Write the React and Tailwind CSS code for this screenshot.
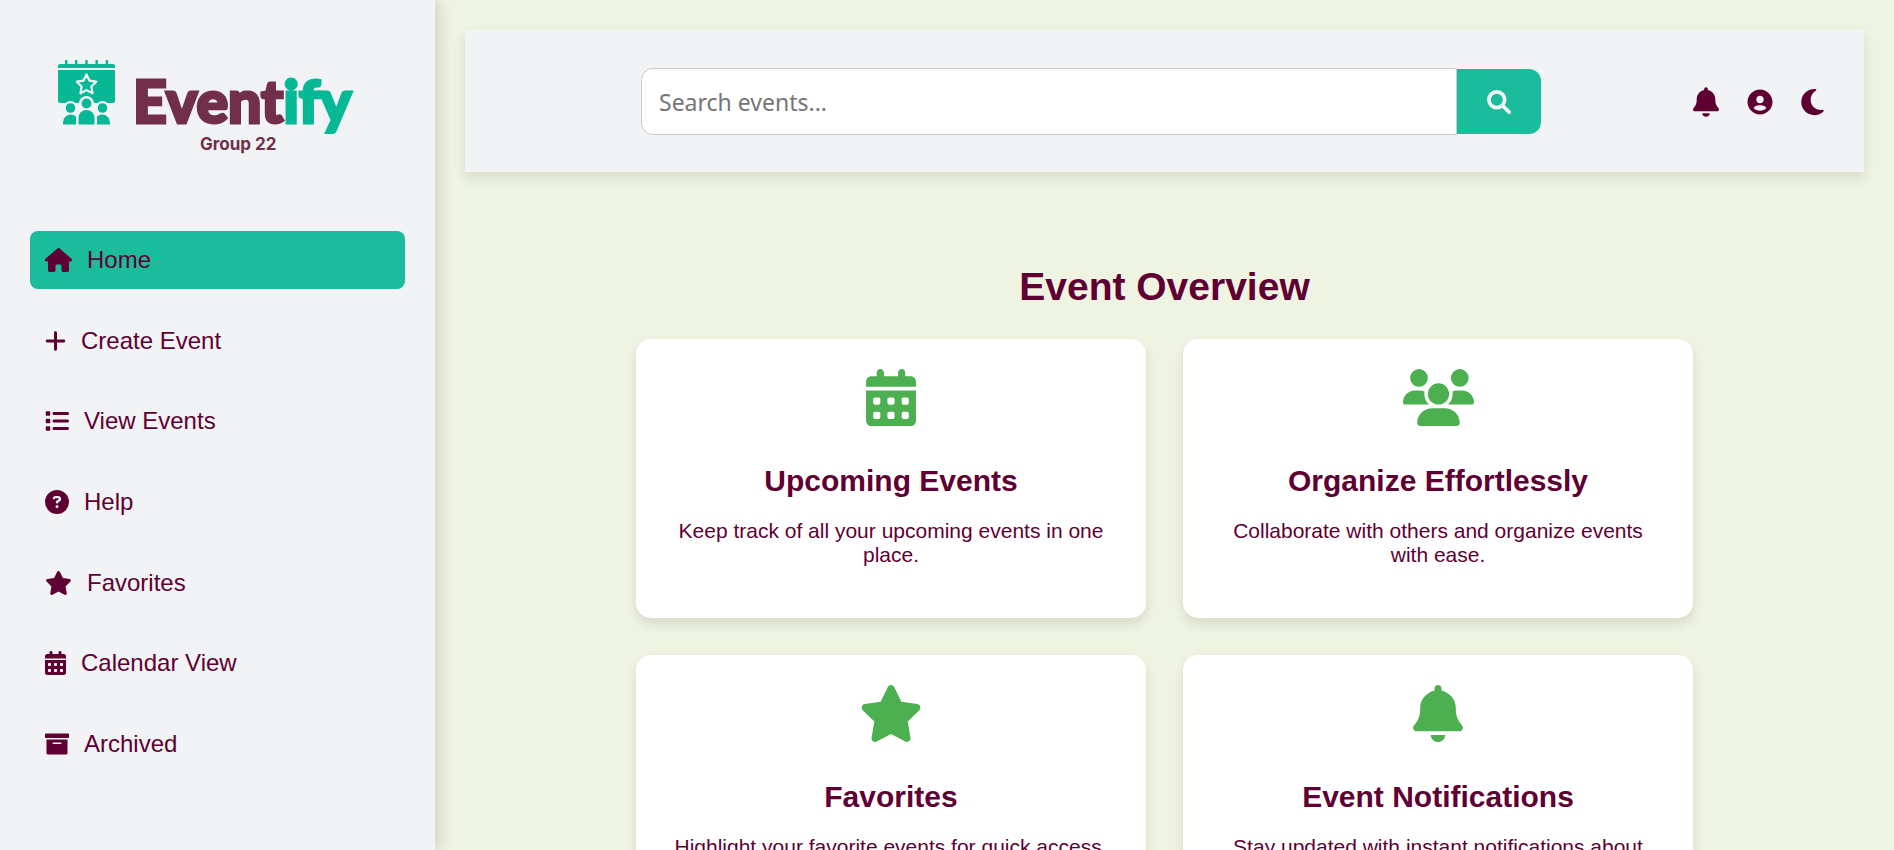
import {
  FaHouse, FaPlus, FaList, FaCircleQuestion, FaStar, FaCalendarDays,
  FaBell, FaMoon,
} from "react-icons/fa6";
import { BiSolidUserCircle } from "react-icons/bi";

function ArchiveIcon({ className }) {
  return (
    <svg viewBox="0 0 512 512" fill="currentColor" className={className} aria-hidden="true">
      <rect x="0" y="32" width="512" height="96" rx="18" />
      <path fillRule="evenodd" d="M32 160h448v288a32 32 0 0 1-32 32H64a32 32 0 0 1-32-32zM176 224a16 16 0 0 0 0 32h160a16 16 0 0 0 0-32z" />
    </svg>
  );
}

const navItems = [
  { label: "Home", Icon: FaHouse, size: "h-6 w-[27px]", active: true },
  { label: "Create Event", Icon: FaPlus, size: "h-6 w-[21px]" },
  { label: "View Events", Icon: FaList, size: "h-6 w-6" },
  { label: "Help", Icon: FaCircleQuestion, size: "h-6 w-6" },
  { label: "Favorites", Icon: FaStar, size: "h-6 w-[27px]" },
  { label: "Calendar View", Icon: FaCalendarDays, size: "h-6 w-[21px]" },
  { label: "Archived", Icon: ArchiveIcon, size: "h-6 w-6" },
];

function PeopleIcon({ className }) {
  return (
    <svg viewBox="0 0 640 512" fill="currentColor" className={className} aria-hidden="true">
      <path d="M144 0a80 80 0 1 1 0 160A80 80 0 1 1 144 0zM512 0a80 80 0 1 1 0 160A80 80 0 1 1 512 0zM0 298.7C0 239.800 47.800 192 106.700 192l42.700 0c15.900 0 31 3.500 44.600 9.700c-1.300 7.200-1.900 14.700-1.900 22.300c0 38.200 16.800 72.500 43.300 96c-.2 0-.4 0-.7 0L21.300 320C9.600 320 0 310.400 0 298.700zM405.300 320c-.2 0-.4 0-.7 0c26.600-23.500 43.300-57.800 43.300-96c0-7.600-.7-15-1.900-22.300c13.600-6.300 28.700-9.700 44.600-9.700l42.700 0C592.200 192 640 239.800 640 298.700c0 11.800-9.600 21.300-21.300 21.300l-213.300 0zM224 224a96 96 0 1 1 192 0 96 96 0 1 1 -192 0zM128 485.300C128 411.700 187.700 352 261.300 352l117.300 0C452.300 352 512 411.700 512 485.300c0 14.700-11.900 26.700-26.700 26.700l-330.700 0c-14.700 0-26.700-11.900-26.700-26.700z" />
    </svg>
  );
}

function SearchIcon({ className }) {
  return (
    <svg viewBox="0 0 512 512" fill="none" stroke="currentColor" strokeWidth="80" className={className} aria-hidden="true">
      <circle cx="208" cy="208" r="168" />
      <path d="M335 335L472 472" strokeLinecap="round" />
    </svg>
  );
}

const cards = [
  { title: "Upcoming Events", text: "Keep track of all your upcoming events in one place.", Icon: FaCalendarDays, size: "h-[57px] w-[50px] text-[#4caf50]" },
  { title: "Organize Effortlessly", text: "Collaborate with others and organize events with ease.", Icon: PeopleIcon, size: "h-[57px] w-[71px] text-[#4caf50]" },
  { title: "Favorites", text: "Highlight your favorite events for quick access.", Icon: FaStar, size: "h-[57px] w-16 text-[#4caf50]" },
  { title: "Event Notifications", text: "Stay updated with instant notifications about your events.", Icon: FaBell, size: "h-[57px] w-[50px] text-[#4caf50]" },
];

function LogoMark() {
  return (
    <svg viewBox="0 0 57 65" className="h-[65px] w-[57px] shrink-0" aria-hidden="true">
      <g fill="#06b896">
        <path d="M2 4h53a2 2 0 0 1 2 2v2H0V6a2 2 0 0 1 2-2z" />
        <path d="M7 0h2.400v5H7zM17 0h2.400v5H17zM27.300 0h2.400v5h-2.400zM37.500 0h2.400v5h-2.400zM47.700 0h2.400v5h-2.400z" />
        <path d="M0 10h57v31q0 2-2 2H2q-2 0-2-2z" />
      </g>
      <g fill="#f1f3f5">
        <circle cx="12.500" cy="48" r="7" />
        <circle cx="28.500" cy="43.500" r="7.500" />
        <circle cx="44.500" cy="48" r="7" />
      </g>
      <path d="M28.500 14.500l3 6.200 6.700 1-4.800 4.800 1.100 6.800-6-3.200-6 3.200 1.100-6.800-4.800-4.800 6.700-1z" fill="none" stroke="#f1f3f5" strokeWidth="2.200" strokeLinejoin="round" />
      <g fill="#06b896">
        <circle cx="12.500" cy="48" r="4.800" />
        <circle cx="28.500" cy="43.500" r="4.900" />
        <circle cx="44.500" cy="48" r="4.800" />
        <path d="M5 64.500v-2a8 8 0 0 1 8-8q2.500 0 5 2v8z" />
        <path d="M52 64.500v-2a8 8 0 0 0-8-8q-2.500 0-5 2v8z" />
        <path d="M20.500 64.500v-6.500a8 8 0 0 1 16 0v6.500z" />
      </g>
    </svg>
  );
}

function Sidebar() {
  return (
    <aside className="relative z-10 w-[435px] shrink-0 bg-[#f1f3f5] px-[30px] pt-[60px] shadow-[6px_0_12px_rgba(0,0,0,0.1)]">
      <a href="#home" className="flex h-[171px] items-start gap-[18px] pl-7">
        <LogoMark />
        <span className="flex flex-col items-center font-['Lato',sans-serif] font-black text-[#722f4a]">
          <span className="text-[59px] leading-[82px] [font-variant-ligatures:none] [-webkit-text-stroke:3px_currentColor]">
            Event<span className="text-[#06b896]">ify</span>
          </span>
          <span className="-mt-2 pr-2 font-['Inter',sans-serif] text-[17px] leading-5 font-bold">Group 22</span>
        </span>
      </a>
      <nav className="flex h-[542px] flex-col justify-between">
        {navItems.map(({ label, Icon, size, active }) => (
          <a
            key={label}
            href={"#" + label.toLowerCase().replace(" ", "-")}
            className={
              active
                ? "flex items-center gap-[15px] rounded-lg bg-[#1abc9c] p-[15px] text-2xl leading-7"
                : "flex items-center gap-[15px] rounded-lg p-[15px] text-2xl leading-7"
            }
          >
            <Icon className={size} />
            {label}
          </a>
        ))}
      </nav>
    </aside>
  );
}

function Header() {
  return (
    <header className="flex items-center bg-[#f1f3f5] pt-[38px] pr-10 pb-[37px] pl-[30px] shadow-[0_6px_12px_rgba(0,0,0,0.1)]">
      <form className="flex flex-1 items-center justify-center" onSubmit={(e) => e.preventDefault()}>
        <input
          type="text"
          aria-label="Search events"
          placeholder="Search events..."
          className="h-[67px] w-full max-w-[816px] min-w-0 rounded-l-xl border border-[#c8cacc] bg-white px-[17px] font-['Noto_Sans',sans-serif] text-[23px] text-[#333] placeholder:text-[#757575]"
        />
        <button type="submit" aria-label="Search" className="flex h-[65px] w-[84px] shrink-0 items-center justify-center rounded-r-xl bg-[#1abc9c] text-[#f1f3f5]">
          <SearchIcon className="h-6 w-6" />
        </button>
      </form>
      <div className="flex items-center gap-[26px] pl-[6px]">
        <button type="button" aria-label="Notifications"><FaBell className="h-[30px] w-[26px]" /></button>
        <button type="button" aria-label="Account"><BiSolidUserCircle className="h-[30px] w-[30px]" /></button>
        <button type="button" aria-label="Dark mode"><FaMoon className="h-[30px] w-[23px]" /></button>
      </div>
    </header>
  );
}

export default function App() {
  return (
    <div className="flex h-screen overflow-hidden bg-[#eff3e1] font-['Liberation_Sans',Arial,sans-serif] text-[#5f0033]">
      <Sidebar />
      <main className="min-w-0 flex-1 p-[30px]">
        <Header />
        <section className="mx-auto mt-[92px] max-w-[1057px]">
          <h1 className="text-center text-[39px] leading-[45px] font-bold">Event Overview</h1>
          <div className="mt-[30px] grid grid-cols-2 gap-[37px]">
            {cards.map(({ title, text, Icon, size }) => (
              <article key={title} className="flex flex-col items-center rounded-[15px] bg-white px-[30px] pt-[30px] pb-[51px] text-center shadow-[0_6px_12px_rgba(0,0,0,0.1)]">
                <Icon className={size} />
                <h2 className="mt-[38px] text-[30px] leading-[34px] font-bold">{title}</h2>
                <p className="mt-[21px] text-[21px] leading-6">{text}</p>
              </article>
            ))}
          </div>
        </section>
      </main>
    </div>
  );
}
